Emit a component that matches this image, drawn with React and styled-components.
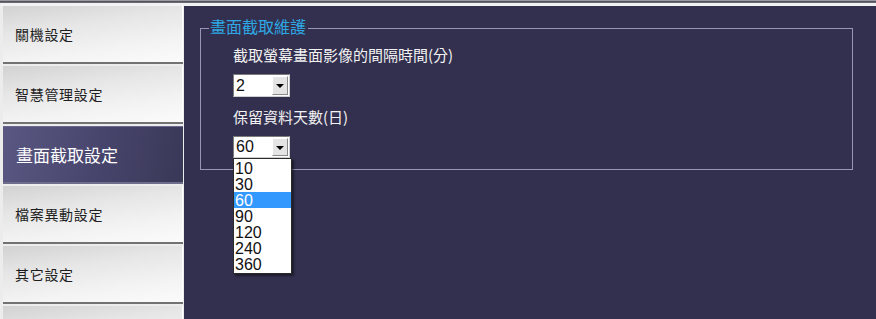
import React from 'react';
import styled, { createGlobalStyle } from 'styled-components';

const GlobalStyle = createGlobalStyle`
  html, body {
    margin: 0;
    padding: 0;
    background: #33304f;
  }
  * {
    box-sizing: border-box;
  }
`;

const Page = styled.div`
  width: 876px;
  height: 319px;
  display: flex;
  flex-direction: column;
  overflow: hidden;
  font-family: "Noto Sans CJK TC", "Liberation Sans", sans-serif;
`;

const TopStrip = styled.div`
  height: 6px;
  flex: none;
  background: #f2f2f4;
  border-top: 1px solid #9a9aa4;
  box-shadow: inset 0 1px 0 #55545c, inset 0 2px 0 #6a6972;
`;

const Body = styled.div`
  flex: 1;
  display: flex;
  min-height: 0;
`;

const Sidebar = styled.div`
  width: 184px;
  flex: none;
  display: flex;
  flex-direction: column;
  padding-left: 3px;
  padding-right: 1px;
  background: #ececec;
`;

const Tab = styled.div`
  height: 58px;
  flex: none;
  display: flex;
  align-items: center;
  padding-left: ${(p) => (p.$active ? '13px' : '12px')};
  margin-bottom: 2px;
  font-size: ${(p) => (p.$active ? '17px' : '14px')};
  letter-spacing: ${(p) => (p.$active ? '0' : '0.7px')};
  color: ${(p) => (p.$active ? '#ffffff' : '#1e1e1e')};
  background: ${(p) =>
    p.$active
      ? 'linear-gradient(100deg, #5a5782 0%, #4a4770 45%, #3a3857 100%)'
      : 'linear-gradient(172deg, #d2d2d2 0%, #e6e6e6 35%, #f3f3f3 70%, #fbfbfb 100%)'};
  border-bottom: 2px solid ${(p) => (p.$active ? '#6f6d8c' : '#727272')};
  box-shadow: ${(p) => (p.$active ? 'inset 0 1px 0 #6b6890' : 'inset -1px 0 0 #ffffff')};
`;

const Main = styled.div`
  flex: 1;
  background: #33304f;
  padding: 10px 23px 0 16px;
`;

const Group = styled.fieldset`
  margin: 0;
  padding: 0;
  border: 1px solid #9795b8;
  border-radius: 0;
  min-width: 0;
`;

const GroupTitle = styled.legend`
  margin-left: 8px;
  padding: 0 2px 4px 1px;
  font-size: 16px;
  line-height: 20px;
  color: #2ea8e4;
`;

const GroupBody = styled.div`
  display: flex;
  flex-direction: column;
  align-items: flex-start;
  padding: 5px 0 11px 32px;
`;

const FieldLabel = styled.div`
  font-size: 15px;
  line-height: 20px;
  color: #f2f2f2;
  margin-bottom: ${(p) => p.$gap}px;
`;

const SelectWrap = styled.div`
  position: relative;
  margin-bottom: ${(p) => p.$gap}px;
`;

const SelectBox = styled.div`
  width: 57px;
  height: ${(p) => p.$h}px;
  display: flex;
  align-items: stretch;
  background: #ffffff;
  border: 1px solid #7c7c7c;
  border-right-color: #cfcfcf;
  border-bottom-color: #cfcfcf;
  padding: 1px;
`;

const SelectValue = styled.div`
  flex: 1;
  font-family: "Liberation Sans", "DejaVu Sans", sans-serif;
  font-size: 16px;
  line-height: ${(p) => p.$h - 4}px;
  padding-left: 1px;
  color: #111;
`;

const ArrowButton = styled.div`
  width: 16px;
  display: flex;
  align-items: center;
  justify-content: center;
  background: #e4e4e4;
  border: 1px solid;
  border-color: #ffffff #8a8a8a #8a8a8a #ffffff;
`;

const Caret = styled.span`
  width: 0;
  height: 0;
  border-left: 4px solid transparent;
  border-right: 4px solid transparent;
  border-top: 4px solid #000;
  margin-top: 1px;
`;

const DropList = styled.div`
  position: absolute;
  left: 0;
  top: 100%;
  width: 59px;
  background: #ffffff;
  border: 1px solid #2a2a2a;
  padding: 1px 0 1px;
  box-shadow: 2px 2px 2px rgba(0, 0, 0, 0.45);
  z-index: 2;
`;

const DropItem = styled.div`
  height: 16px;
  line-height: 17px;
  padding-left: 1px;
  font-family: "Liberation Sans", "DejaVu Sans", sans-serif;
  font-size: 16px;
  color: ${(p) => (p.$selected ? '#ffffff' : '#111')};
  background: ${(p) => (p.$selected ? '#3399ff' : 'transparent')};
`;

const tabs = ['關機設定', '智慧管理設定', '畫面截取設定', '檔案異動設定', '其它設定', ''];
const days = ['10', '30', '60', '90', '120', '240', '360'];

function Select({ value, h, open, options }) {
  return (
    <>
      <SelectBox $h={h}>
        <SelectValue $h={h}>{value}</SelectValue>
        <ArrowButton>
          <Caret />
        </ArrowButton>
      </SelectBox>
      {open && (
        <DropList>
          {options.map((o) => (
            <DropItem key={o} $selected={o === value}>
              {o}
            </DropItem>
          ))}
        </DropList>
      )}
    </>
  );
}

export default function App() {
  return (
    <>
      <GlobalStyle />
      <Page>
        <TopStrip />
        <Body>
          <Sidebar>
            {tabs.map((t, i) => (
              <Tab key={i} $active={i === 2}>
                {t}
              </Tab>
            ))}
          </Sidebar>
          <Main>
            <Group>
              <GroupTitle>畫面截取維護</GroupTitle>
              <GroupBody>
                <FieldLabel $gap={9}>截取螢幕畫面影像的間隔時間(分)</FieldLabel>
                <SelectWrap $gap={10}>
                  <Select value="2" h={23} />
                </SelectWrap>
                <FieldLabel $gap={9}>保留資料天數(日)</FieldLabel>
                <SelectWrap $gap={0}>
                  <Select value="60" h={22} open options={days} />
                </SelectWrap>
              </GroupBody>
            </Group>
          </Main>
        </Body>
      </Page>
    </>
  );
}
